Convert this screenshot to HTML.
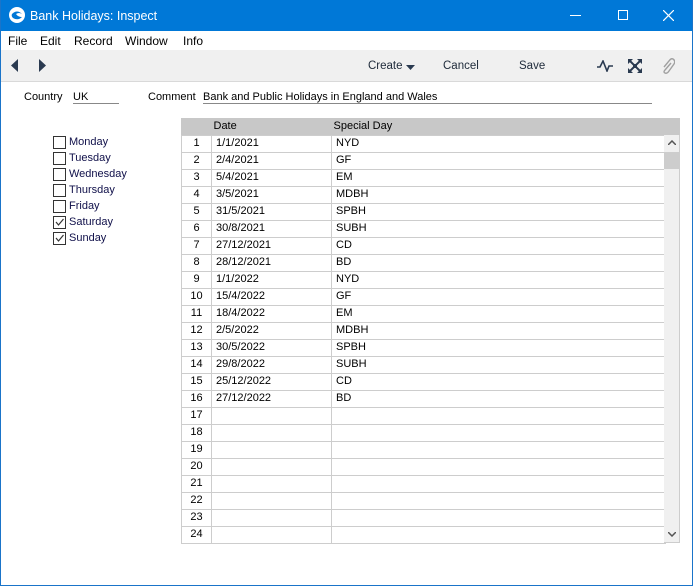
<!DOCTYPE html>
<html><head><style>
*{margin:0;padding:0;box-sizing:border-box}
body{width:693px;height:586px;background:#fff;font-family:"Liberation Sans",Tahoma,sans-serif;font-size:12px;color:#000;position:relative;overflow:hidden}
.win{position:absolute;left:0;top:0;width:693px;height:586px;border:1px solid #1a74c9;border-top:none}
.title{position:absolute;left:0;top:0;width:693px;height:31px;background:#0078d7;color:#fff;font-size:12px}
.menu{position:absolute;left:0;top:31px;width:693px;height:19px;background:#fff;font-size:12px}
.menu span{position:absolute;top:3px}
.tb{position:absolute;left:1px;top:50px;width:691px;height:32px;background:#f0f0f0;border-bottom:1px solid #d9d9d9}
.tb span{position:absolute;top:10px;color:#1e2a3a;font-size:11.5px}
.a{position:absolute}
.f{font-size:11px}
table{position:absolute;left:181px;top:118px;border-collapse:collapse;width:484px;table-layout:fixed}
td{height:17px;border:1px solid #cdcdcd;padding:0 0 0 4px;font-size:11px;line-height:15px;white-space:nowrap;overflow:hidden}
td.n{text-align:center;padding:0}
th{height:17px;background:#c8c8c8;font-weight:normal;text-align:left;font-size:11px;padding-left:2px;border:none}
.cb{position:absolute;left:53px;width:13px;height:13px;border:1px solid #333;background:#fff}
.cl{position:absolute;left:69px;font-size:11px;color:#10104a}
</style></head><body>
<div class="title">
<svg class="a" style="left:8px;top:6px" width="18" height="18" viewBox="0 0 18 18"><circle cx="9" cy="9" r="8" fill="#fff"/><path d="M4 8 Q9 3 14 8 Q11 6 8 8 Q10 11 14 11 Q10 15 5 12 Q3 10 4 8Z" fill="#0078d7"/></svg>
<span class="a" style="left:30px;top:9px;font-size:12.5px">Bank Holidays: Inspect</span>
<div class="a" style="left:570px;top:15px;width:11px;height:1px;background:#fff"></div>
<div class="a" style="left:618px;top:10px;width:10px;height:10px;border:1px solid #fff"></div>
<svg class="a" style="left:663px;top:10px" width="11" height="11"><path d="M0 0L11 11M11 0L0 11" stroke="#fff" stroke-width="1.2"/></svg>
</div>
<div class="menu"><span style="left:8px">File</span><span style="left:40px">Edit</span><span style="left:74px">Record</span><span style="left:125px">Window</span><span style="left:183px">Info</span></div>
<div class="tb">
<svg class="a" style="left:10px;top:9px" width="8" height="13"><path d="M7 0L0 6.5L7 13Z" fill="#2a3a50"/></svg>
<svg class="a" style="left:37px;top:9px" width="8" height="13"><path d="M1 0L8 6.5L1 13Z" fill="#2a3a50"/></svg>
<span style="left:367px">Create</span>
<svg class="a" style="left:405px;top:15px" width="9" height="5"><path d="M0 0H9L4.5 5Z" fill="#2a3a50"/></svg>
<span style="left:442px">Cancel</span><span style="left:518px">Save</span>
<svg class="a" style="left:596px;top:10px" width="16" height="12"><path d="M0 7H3L6 1L10 11L12 6H16" stroke="#2a3a50" stroke-width="1.6" fill="none"/></svg>
<svg class="a" style="left:627px;top:9px" width="14" height="14"><path d="M0 0H5L0 5ZM14 0V5L9 0ZM0 14V9L5 14ZM14 14H9L14 9Z" fill="#2a3a50"/><path d="M2 2L12 12M12 2L2 12" stroke="#2a3a50" stroke-width="2"/><rect x="5" y="5" width="4" height="4" fill="#2a3a50"/></svg>
<svg class="a" style="left:660px;top:8px" width="14" height="16"><path d="M10 5L4 12Q2 14 4 15Q6 16 8 13L13 6Q15 3 12 1Q10 0 8 3L3 9" stroke="#a0a0a0" stroke-width="1.4" fill="none"/></svg>
</div>
<span class="a f" style="left:24px;top:91px">Country</span>
<span class="a f" style="left:73px;top:91px">UK</span>
<div class="a" style="left:73px;top:103px;width:46px;height:1px;background:#888"></div>
<span class="a f" style="left:148px;top:91px">Comment</span>
<span class="a f" style="left:203px;top:91px">Bank and Public Holidays in England and Wales</span>
<div class="a" style="left:203px;top:103px;width:449px;height:1px;background:#888"></div>

<div class="cb" style="top:136px"></div><span class="cl" style="top:136px">Monday</span>
<div class="cb" style="top:152px"></div><span class="cl" style="top:152px">Tuesday</span>
<div class="cb" style="top:168px"></div><span class="cl" style="top:168px">Wednesday</span>
<div class="cb" style="top:184px"></div><span class="cl" style="top:184px">Thursday</span>
<div class="cb" style="top:200px"></div><span class="cl" style="top:200px">Friday</span>
<div class="cb" style="top:216px"><svg width="11" height="11" style="position:absolute;left:0;top:0"><path d="M2 5L4.5 8L9.5 2" stroke="#333" fill="none" stroke-width="1.2"/></svg></div><span class="cl" style="top:216px">Saturday</span>
<div class="cb" style="top:232px"><svg width="11" height="11" style="position:absolute;left:0;top:0"><path d="M2 5L4.5 8L9.5 2" stroke="#333" fill="none" stroke-width="1.2"/></svg></div><span class="cl" style="top:232px">Sunday</span>

<div class="a" style="left:181px;top:118px;width:499px;height:17px;background:#c8c8c8"></div>
<table>
<colgroup><col style="width:30px"><col style="width:120px"><col style="width:334px"></colgroup>
<tr><th></th><th style="padding-left:2px">Date</th><th style="padding-left:2px">Special Day</th></tr>
<tr><td class="n">1</td><td>1/1/2021</td><td>NYD</td></tr>
<tr><td class="n">2</td><td>2/4/2021</td><td>GF</td></tr>
<tr><td class="n">3</td><td>5/4/2021</td><td>EM</td></tr>
<tr><td class="n">4</td><td>3/5/2021</td><td>MDBH</td></tr>
<tr><td class="n">5</td><td>31/5/2021</td><td>SPBH</td></tr>
<tr><td class="n">6</td><td>30/8/2021</td><td>SUBH</td></tr>
<tr><td class="n">7</td><td>27/12/2021</td><td>CD</td></tr>
<tr><td class="n">8</td><td>28/12/2021</td><td>BD</td></tr>
<tr><td class="n">9</td><td>1/1/2022</td><td>NYD</td></tr>
<tr><td class="n">10</td><td>15/4/2022</td><td>GF</td></tr>
<tr><td class="n">11</td><td>18/4/2022</td><td>EM</td></tr>
<tr><td class="n">12</td><td>2/5/2022</td><td>MDBH</td></tr>
<tr><td class="n">13</td><td>30/5/2022</td><td>SPBH</td></tr>
<tr><td class="n">14</td><td>29/8/2022</td><td>SUBH</td></tr>
<tr><td class="n">15</td><td>25/12/2022</td><td>CD</td></tr>
<tr><td class="n">16</td><td>27/12/2022</td><td>BD</td></tr>
<tr><td class="n">17</td><td></td><td></td></tr>
<tr><td class="n">18</td><td></td><td></td></tr>
<tr><td class="n">19</td><td></td><td></td></tr>
<tr><td class="n">20</td><td></td><td></td></tr>
<tr><td class="n">21</td><td></td><td></td></tr>
<tr><td class="n">22</td><td></td><td></td></tr>
<tr><td class="n">23</td><td></td><td></td></tr>
<tr><td class="n">24</td><td></td><td></td></tr>
</table>
<div class="a" style="left:664px;top:135px;width:16px;height:408px;background:#f0f0f0;border-right:1px solid #cdcdcd;border-bottom:1px solid #cdcdcd"></div>
<div class="a" style="left:664px;top:152px;width:15px;height:17px;background:#cdcdcd"></div>
<svg class="a" style="left:668px;top:140px" width="8" height="5"><path d="M0 5L4 1L8 5" stroke="#555" stroke-width="1.5" fill="none"/></svg>
<svg class="a" style="left:668px;top:532px" width="8" height="5"><path d="M0 0L4 4L8 0" stroke="#555" stroke-width="1.5" fill="none"/></svg>
<div class="win"></div>
</body></html>
